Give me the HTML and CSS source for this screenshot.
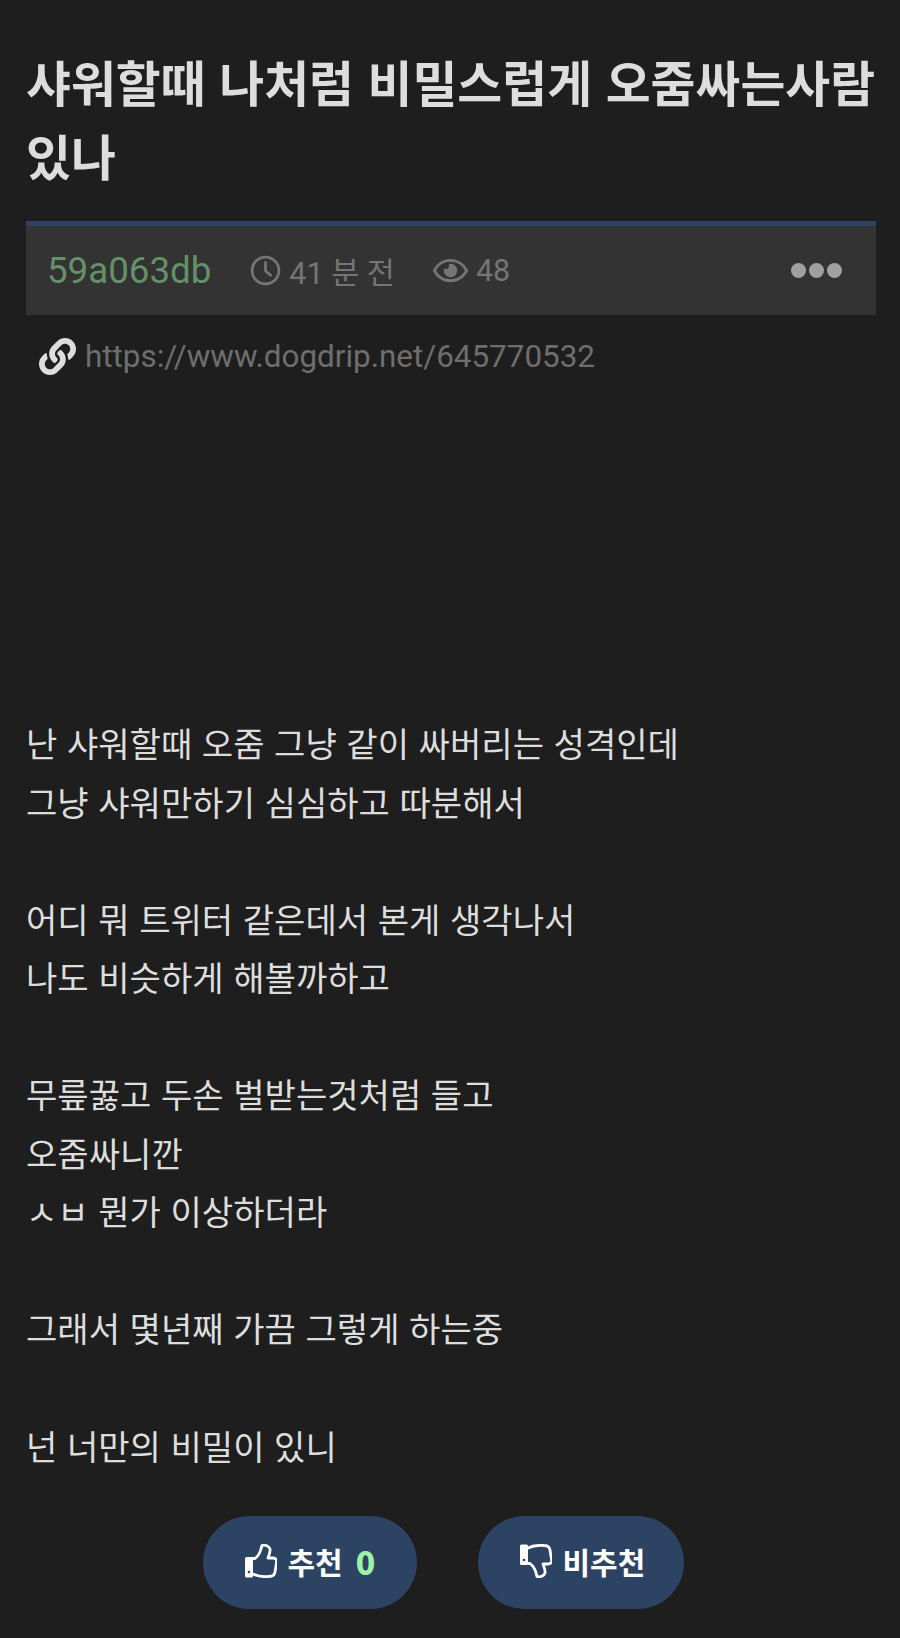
FILE: index.html
```html
<!DOCTYPE html>
<html lang="ko">
<head>
    <meta charset="UTF-8">
    <title>샤워할때 나처럼 비밀스럽게 오줌싸는사람 있나</title>
    <link rel="stylesheet" href="styles.css">
</head>
<body>
    <h1 class="title">샤워할때 나처럼 비밀스럽게 오줌싸는사람 있나</h1>

    <div class="meta-bar">
        <span class="author">59a063db</span>
        <span class="meta-item meta-time">
            <svg class="icon-clock" viewBox="0 0 30 30"><circle cx="15" cy="15" r="13" fill="none" stroke="currentColor" stroke-width="2.6"/><path d="M15 7v8.5l5 4" fill="none" stroke="currentColor" stroke-width="2.6" stroke-linecap="round" stroke-linejoin="round"/></svg>
            41 분 전
        </span>
        <span class="meta-item meta-views">
            <svg class="icon-eye" viewBox="0 0 576 512"><path fill="currentColor" d="M288 144a110.94 110.94 0 0 0-31.24 5 55.4 55.4 0 0 1 7.24 27 56 56 0 0 1-56 56 55.4 55.4 0 0 1-27-7.24A111.71 111.71 0 1 0 288 144zm284.52 97.4C518.29 135.59 410.93 64 288 64S57.68 135.64 3.48 241.41a32.35 32.35 0 0 0 0 29.19C57.71 376.41 165.07 448 288 448s230.32-71.64 284.52-177.41a32.35 32.35 0 0 0 0-29.19zM288 400c-98.65 0-189.09-55-237.93-144C98.91 167 189.34 112 288 112s189.09 55 237.93 144C477.1 345 386.66 400 288 400z"/></svg>
            48
        </span>
        <span class="more-dots"><i></i><i></i><i></i></span>
    </div>

    <div class="link-row">
        <svg class="icon-link" viewBox="0 0 512 512"><path fill="currentColor" d="M326.612 185.391c59.747 59.809 58.927 155.698.36 214.59-.11.12-.24.25-.36.37l-67.2 67.2c-59.27 59.27-155.699 59.262-214.96 0-59.27-59.26-59.27-155.7 0-214.96l37.106-37.106c9.84-9.84 26.786-3.3 27.294 10.606.648 17.722 3.826 35.527 9.69 52.721 1.986 5.822.567 12.262-3.783 16.612l-13.087 13.087c-28.026 28.026-28.905 73.66-1.155 101.96 28.024 28.579 74.086 28.749 102.325.51l67.2-67.19c28.191-28.191 28.073-73.757 0-101.83-3.701-3.694-7.429-6.564-10.341-8.569a16.037 16.037 0 0 1-6.947-12.606c-.396-10.567 3.348-21.456 11.698-29.806l21.054-21.055c5.521-5.521 14.182-6.199 20.584-1.731a152.482 152.482 0 0 1 20.522 17.197zM467.547 44.449c-59.261-59.262-155.69-59.27-214.96 0l-67.2 67.2c-.12.12-.25.25-.36.37-58.566 58.892-59.387 154.781.36 214.59a152.454 152.454 0 0 0 20.521 17.196c6.402 4.468 15.064 3.789 20.584-1.731l21.054-21.055c8.35-8.35 12.094-19.239 11.698-29.806a16.037 16.037 0 0 0-6.947-12.606c-2.912-2.005-6.64-4.875-10.341-8.569-28.073-28.073-28.191-73.639 0-101.83l67.2-67.19c28.239-28.239 74.3-28.069 102.325.51 27.75 28.3 26.872 73.934-1.155 101.96l-13.087 13.087c-4.35 4.35-5.769 10.79-3.783 16.612 5.864 17.194 9.042 34.999 9.69 52.721.509 13.906 17.454 20.446 27.294 10.606l37.106-37.106c59.271-59.259 59.271-155.699.001-214.959z"/></svg>
        <span class="link-url">https://www.dogdrip.net/645770532</span>
    </div>

    <div class="post-body">
        <p>난 샤워할때 오줌 그냥 같이 싸버리는 성격인데</p>
        <p>그냥 샤워만하기 심심하고 따분해서</p>
        <p>&nbsp;</p>
        <p>어디 뭐 트위터 같은데서 본게 생각나서</p>
        <p>나도 비슷하게 해볼까하고</p>
        <p>&nbsp;</p>
        <p>무릎꿇고 두손 벌받는것처럼 들고</p>
        <p>오줌싸니깐</p>
        <p>ㅅㅂ 뭔가 이상하더라</p>
        <p>&nbsp;</p>
        <p>그래서 몇년째 가끔 그렇게 하는중</p>
        <p>&nbsp;</p>
        <p>넌 너만의 비밀이 있니</p>
    </div>

    <div class="vote-row">
        <button class="vote-button vote-up">
            <svg class="icon-thumb" viewBox="0 0 32 34">
                <rect class="cuff" x="0" y="13" width="8" height="20.5" rx="1.5"/>
                <circle class="cuff-hole" cx="4" cy="28" r="1.3"/>
                <path class="hand" d="M8 14.5H10C12 13 15 9 16 5L17 1.5C20 0.5 24 2 25 5C25.5 8 24 11 23 14H28C31 14 32 16 31.5 19L30 28C29.5 31 27 32.5 24 32.5C18 33 12 32 8 30"/>
            </svg>
            추천 <span class="vote-count">0</span>
        </button>
        <button class="vote-button vote-down">
            <svg class="icon-thumb" viewBox="0 0 32 34">
                <g transform="matrix(1 0 0 -1 0 34)">
                    <rect class="cuff" x="0" y="13" width="8" height="20.5" rx="1.5"/>
                    <path class="hand" d="M8 14.5H10C12 13 15 9 16 5L17 1.5C20 0.5 24 2 25 5C25.5 8 24 11 23 14H28C31 14 32 16 31.5 19L30 28C29.5 31 27 32.5 24 32.5C18 33 12 32 8 30"/>
                </g>
                <circle class="cuff-hole" cx="4" cy="16" r="1.3"/>
            </svg>
            비추천
        </button>
    </div>
</body>
</html>
```

FILE: styles.css
```css
body {
    margin: 0;
    padding: 0 24px 0 26px;
    background: #1e1e1e;
    color: #ddd;
    font-family: Roboto, "Noto Sans CJK KR", sans-serif;
}
.title {
    margin: 0;
    padding-top: 44px;
    font-family: "Noto Sans CJK KR", sans-serif;
    font-size: 48.8px;
    font-weight: 700;
    line-height: 74px;
    color: #ddd;
}
.meta-bar {
    display: flex;
    align-items: center;
    height: 89px;
    margin-top: 29px;
    padding: 0 21px;
    background: #333;
    border-top: 5px solid #2c4364;
    color: #757575;
}
.author {
    font-size: 36.7px;
    color: #649268;
}
.meta-item {
    display: flex;
    align-items: center;
    gap: 8px;
    font-size: 30.5px;
}
.meta-time {
    margin-left: 39px;
}
.meta-views {
    margin-left: 38px;
}
.icon-clock {
    width: 31px;
    height: 31px;
}
.icon-eye {
    width: 35px;
    height: 31px;
}
.more-dots {
    display: flex;
    gap: 3px;
    margin-left: auto;
    margin-right: 13px;
}
.more-dots i {
    width: 15px;
    height: 15px;
    border-radius: 50%;
    background: #a0a0a0;
}
.link-row {
    display: flex;
    align-items: center;
    gap: 9px;
    margin-top: 23px;
    padding-left: 13px;
}
.icon-link {
    width: 37px;
    height: 37px;
    color: #ddd;
}
.link-url {
    font-size: 31.4px;
    color: #6e6e6e;
}
.post-body {
    margin-top: 338px;
    font-family: "Noto Sans CJK KR", sans-serif;
    font-size: 34.1px;
    line-height: 58.55px;
    color: #ddd;
}
.post-body p {
    margin: 0;
}
.vote-row {
    display: flex;
    justify-content: center;
    gap: 61px;
    margin-top: 42px;
    padding-right: 16px;
}
.vote-button {
    display: flex;
    align-items: center;
    gap: 11px;
    height: 93px;
    padding: 0 0 3px 42px;
    border: none;
    border-radius: 47px;
    background: #2c4364;
    color: #fff;
    font-family: "Noto Sans CJK KR", sans-serif;
    font-size: 30px;
    font-weight: 700;
}
.vote-up {
    width: 214px;
}
.vote-down {
    width: 206px;
}
.vote-count {
    margin-left: 2px;
    font-size: 32px;
    font-weight: 900;
    color: #a0f0a8;
}
.icon-thumb {
    width: 32px;
    height: 34px;
}
.cuff {
    fill: #fff;
}
.cuff-hole {
    fill: #2c4364;
}
.hand {
    fill: none;
    stroke: #fff;
    stroke-width: 2.8;
    stroke-linejoin: round;
    stroke-linecap: round;
}
```
